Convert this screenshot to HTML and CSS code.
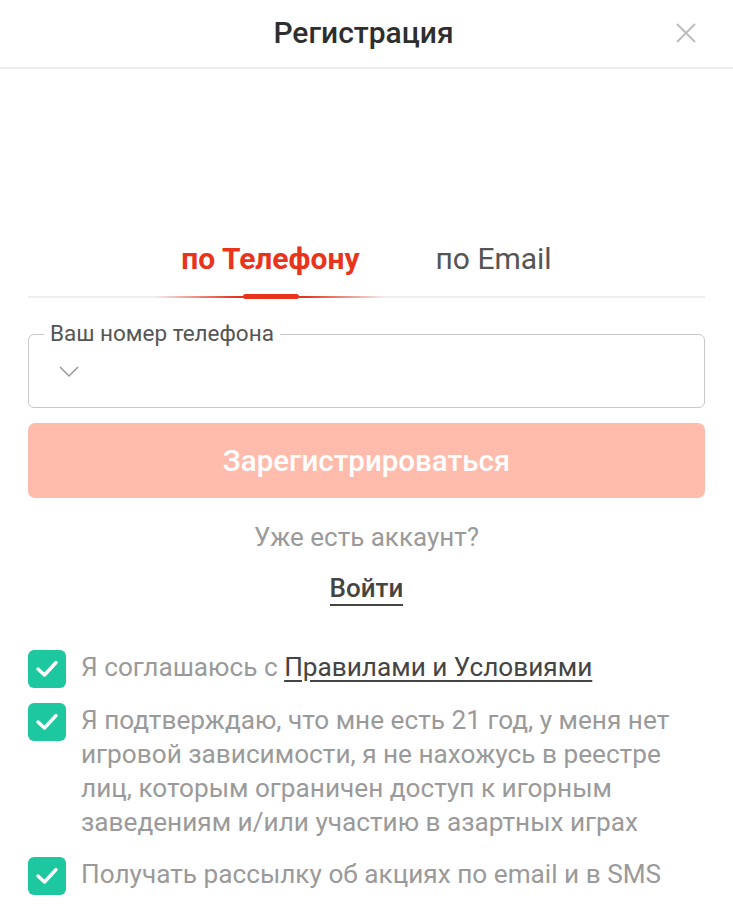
FILE: index.html
```html
<!DOCTYPE html>
<html lang="ru">
<head>
    <meta charset="UTF-8">
    <meta name="viewport" content="width=device-width, initial-scale=1.0">
    <title>Регистрация</title>
    <link rel="stylesheet" href="styles.css">
</head>
<body>
    <header class="modal-header">
        <h1>Регистрация</h1>
        <button class="close-btn" aria-label="Закрыть">
            <svg width="22" height="22" viewBox="0 0 22 22"><path d="M2 2 L20 20 M20 2 L2 20" stroke="#bdbdbd" stroke-width="2" fill="none"/></svg>
        </button>
    </header>

    <main class="modal-body">
        <nav class="tabs">
            <div class="tab active">по Телефону</div>
            <div class="tab">по Email</div>
        </nav>

        <div class="field">
            <span class="field-label">Ваш номер телефона</span>
            <div class="field-input">
                <svg class="chevron" width="20" height="12" viewBox="0 0 20 12"><path d="M1 1 L10 10 L19 1" stroke="#999" stroke-width="1.5" fill="none"/></svg>
                <input type="tel">
            </div>
        </div>

        <button class="btn-register">Зарегистрироваться</button>

        <p class="have-account">Уже есть аккаунт?</p>
        <a class="login-link" href="#">Войти</a>

        <ul class="checks">
            <li>
                <span class="checkbox"><svg width="24" height="20" viewBox="0 0 24 20"><path d="M3 10 L9.5 16 L21 3.5" stroke="#fff" stroke-width="3.4" fill="none" stroke-linecap="round" stroke-linejoin="round"/></svg></span>
                <span>Я соглашаюсь с <a href="#">Правилами и Условиями</a></span>
            </li>
            <li class="long">
                <span class="checkbox"><svg width="24" height="20" viewBox="0 0 24 20"><path d="M3 10 L9.5 16 L21 3.5" stroke="#fff" stroke-width="3.4" fill="none" stroke-linecap="round" stroke-linejoin="round"/></svg></span>
                <span>Я подтверждаю, что мне есть 21 год, у меня нет игровой зависимости, я не нахожусь в реестре лиц, которым ограничен доступ к игорным заведениям и/или участию в азартных играх</span>
            </li>
            <li>
                <span class="checkbox"><svg width="24" height="20" viewBox="0 0 24 20"><path d="M3 10 L9.5 16 L21 3.5" stroke="#fff" stroke-width="3.4" fill="none" stroke-linecap="round" stroke-linejoin="round"/></svg></span>
                <span>Получать рассылку об акциях по email и в SMS</span>
            </li>
        </ul>
    </main>
</body>
</html>
```

FILE: styles.css
```css
:root {
    --accent: #e8341c;
    --text: #333;
    --muted: #9a9a9a;
    --line: #ececec;
    --green: #1dc79f;
}

* {
    margin: 0;
    padding: 0;
    box-sizing: border-box;
}

body {
    font-family: Roboto, 'Noto Sans', sans-serif;
    color: var(--text);
    background: #fff;
    width: 733px;
}

.modal-header {
    height: 69px;
    display: flex;
    align-items: center;
    justify-content: center;
    border-bottom: 2px solid var(--line);
    position: relative;
}

.modal-header h1 {
    font-size: 30px;
    font-weight: 500;
    color: #2e2e2e;
    margin-top: -2px;
    margin-right: 6px;
}

.close-btn {
    position: absolute;
    right: 36px;
    top: 22px;
    background: none;
    border: none;
    display: flex;
}

.modal-body {
    padding: 0 28px;
}

.tabs {
    margin-top: 170px;
    display: flex;
    justify-content: center;
    gap: 76px;
    padding-bottom: 17px;
    position: relative;
    border-bottom: 2px solid #efefef;
}

.tab {
    font-size: 30px;
    color: #555;
    line-height: 40px;
}

.tab.active {
    color: var(--accent);
    font-weight: 700;
}

.tab.active::before {
    content: '';
    position: absolute;
    left: 127px;
    width: 230px;
    bottom: -2px;
    height: 2px;
    background: linear-gradient(90deg, rgba(232,52,28,0) 0%, var(--accent) 35%, var(--accent) 65%, rgba(232,52,28,0) 100%);
}

.tab.active::after {
    content: '';
    position: absolute;
    left: 215px;
    width: 56px;
    bottom: -3px;
    height: 5px;
    border-radius: 3px;
    background: var(--accent);
}

.field {
    margin-top: 36px;
    position: relative;
}

.field-label {
    position: absolute;
    left: 16px;
    top: -13px;
    padding: 0 6px;
    background: #fff;
    font-size: 22.5px;
    line-height: 24px;
    color: #555;
}

.field-input {
    height: 74px;
    border: 1px solid #c8c8c8;
    border-radius: 6px;
    display: flex;
    align-items: center;
    padding-left: 30px;
    gap: 20px;
}

.chevron {
    margin-top: 2px;
}

.field-input input {
    border: none;
    outline: none;
    height: 100%;
    flex: 1;
    font-size: 24px;
    font-family: inherit;
    background: transparent;
}

.btn-register {
    display: block;
    width: 100%;
    margin-top: 15px;
    height: 75px;
    border: none;
    border-radius: 7px;
    background: #ffbcad;
    color: #fff;
    font-family: inherit;
    font-size: 29.5px;
    font-weight: 500;
}

.have-account {
    margin-top: 23px;
    text-align: center;
    font-size: 26px;
    color: var(--muted);
    line-height: 32px;
}

.login-link {
    display: table;
    margin: 20px auto 0;
    font-size: 26px;
    font-weight: 500;
    color: #444;
    text-decoration: none;
    border-bottom: 2px solid #444;
    line-height: 30px;
    padding-bottom: 1px;
}

.checks {
    list-style: none;
    margin-top: 44px;
}

.checks li {
    display: flex;
    gap: 15px;
    font-size: 26.2px;
    line-height: 34px;
    color: var(--muted);
    margin-bottom: 15px;
}

.checks li.long {
    margin-bottom: 18px;
}

.checkbox {
    flex: 0 0 38px;
    height: 38px;
    border-radius: 6px;
    background: var(--green);
    display: flex;
    align-items: center;
    justify-content: center;
}

.checks a {
    color: #444;
    text-decoration: underline;
    text-underline-offset: 4px;
}
```
